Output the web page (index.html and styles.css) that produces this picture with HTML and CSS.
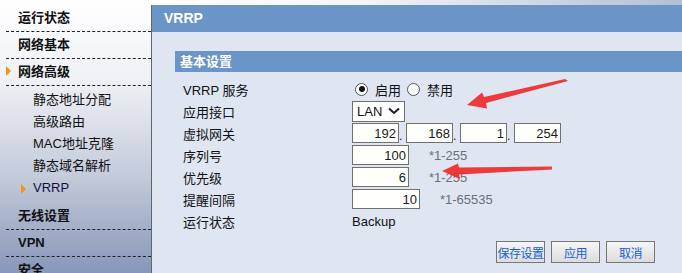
FILE: index.html
```html
<!DOCTYPE html>
<html lang="zh-CN">
<head>
  <meta charset="UTF-8">
  <title>VRRP</title>
  <link rel="stylesheet" href="styles.css">
</head>
<body>
  <div class="page">
    <!-- 左侧菜单 -->
    <div class="sidebar">
      <div class="menu-item">运行状态</div>
      <div class="menu-item">网络基本</div>
      <div class="menu-item open"><span class="tri"></span>网络高级</div>
      <div class="submenu">
        <div class="sub-item">静态地址分配</div>
        <div class="sub-item">高级路由</div>
        <div class="sub-item">MAC地址克隆</div>
        <div class="sub-item">静态域名解析</div>
        <div class="sub-item active"><span class="tri small"></span>VRRP</div>
      </div>
      <div class="menu-item">无线设置</div>
      <div class="menu-item">VPN</div>
      <div class="menu-item">安全</div>
    </div>

    <!-- 右侧内容 -->
    <div class="main">
      <div class="top-strip"></div>
      <div class="panel">
        <div class="panel-title">VRRP</div>
        <div class="content">
          <div class="section-title">基本设置</div>

          <div class="form-row">
            <label class="label">VRRP 服务</label>
            <div class="ctrl">
              <span class="radio checked"></span><span class="radio-text">启用</span>
              <span class="radio"></span><span class="radio-text">禁用</span>
            </div>
          </div>
          <div class="form-row">
            <label class="label">应用接口</label>
            <div class="ctrl">
              <div class="select">
                <span>LAN</span>
                <svg width="12" height="8" viewBox="0 0 12 8"><path d="M1 1.5 L6 6 L11 1.5" fill="none" stroke="#1a1a2a" stroke-width="2"/></svg>
              </div>
            </div>
          </div>
          <div class="form-row">
            <label class="label">虚拟网关</label>
            <div class="ctrl">
              <input class="box ip" type="text" value="192"><span class="dot">.</span>
              <input class="box ip" type="text" value="168"><span class="dot">.</span>
              <input class="box ip" type="text" value="1"><span class="dot">.</span>
              <input class="box ip" type="text" value="254">
            </div>
          </div>
          <div class="form-row">
            <label class="label">序列号</label>
            <div class="ctrl">
              <input class="box w57" type="text" value="100"><span class="hint">*1-255</span>
            </div>
          </div>
          <div class="form-row">
            <label class="label">优先级</label>
            <div class="ctrl">
              <input class="box w57" type="text" value="6"><span class="hint">*1-255</span>
            </div>
          </div>
          <div class="form-row">
            <label class="label">提醒间隔</label>
            <div class="ctrl">
              <input class="box w68" type="text" value="10"><span class="hint">*1-65535</span>
            </div>
          </div>
          <div class="form-row">
            <label class="label">运行状态</label>
            <div class="ctrl">Backup</div>
          </div>

          <div class="btn-row">
            <button class="btn">保存设置</button>
            <button class="btn">应用</button>
            <button class="btn">取消</button>
          </div>
        </div>
      </div>
    </div>

    <!-- 截图上的红色箭头标注 -->
    <svg class="marks" width="682" height="273" viewBox="0 0 682 273">
      <polygon points="467,105 482,92.5 484,97 565,79 568,81 486,103 487,108.5" fill="#ee2b2b" opacity="0.92"/>
      <polygon points="442,171 458,163.5 459,167.5 552,166.5 552,169.5 459,174.5 460,179" fill="#ee2b2b" opacity="0.92"/>
    </svg>
  </div>
</body>
</html>
```

FILE: styles.css
```css
* {
  box-sizing: border-box;
}

body {
  margin: 0;
  font-family: "Liberation Sans", "Noto Sans CJK SC", sans-serif;
  font-size: 13px;
  color: #111;
}

.page {
  position: relative;
  display: flex;
  width: 682px;
  height: 273px;
  overflow: hidden;
}

/* 左侧菜单 */
.sidebar {
  width: 151px;
  flex-shrink: 0;
  padding-top: 5px;
  background: linear-gradient(#ffffff, #eef0f4 30%, #c3cad9 65%, #8797b9);
}

.menu-item {
  position: relative;
  height: 27px;
  line-height: 26px;
  margin-left: 6px;
  padding-left: 12px;
  font-weight: bold;
  font-size: 13px;
  border-bottom: 1px dashed #222;
}

.submenu {
  padding: 3px 0 4px 0;
}

.sub-item {
  position: relative;
  height: 22px;
  line-height: 22px;
  padding-left: 33px;
  font-size: 13px;
}

.sub-item.active {
  color: #101040;
}

.tri {
  position: absolute;
  left: 0;
  top: 7px;
  width: 0;
  height: 0;
  border-top: 5px solid transparent;
  border-bottom: 5px solid transparent;
  border-left: 5px solid #f29418;
}

.tri.small {
  left: 21px;
  top: 7px;
}

/* 右侧内容 */
.main {
  flex: 1;
  display: flex;
  flex-direction: column;
}

.top-strip {
  height: 5px;
  background: linear-gradient(90deg, #ffffff, #f4f5f8 40%, #b3bfd3);
}

.panel {
  flex: 1;
  border-left: 1px solid #5f6670;
  background: #dfe6f2;
}

.panel-title {
  height: 27px;
  line-height: 26px;
  padding-left: 12px;
  background: #6a95c6;
  color: #fff;
  font-weight: bold;
  font-size: 14px;
}

.content {
  padding: 19px 0 0 23px;
}

.section-title {
  height: 21px;
  line-height: 21px;
  padding-left: 5px;
  background: #6a95c6;
  color: #fff;
  font-weight: bold;
  font-size: 13px;
  margin-bottom: 6px;
}

.form-row {
  display: flex;
  align-items: center;
  height: 22px;
}

.label {
  width: 177px;
  padding-left: 8px;
  flex-shrink: 0;
}

.ctrl {
  display: flex;
  align-items: center;
}

.radio {
  display: inline-block;
  width: 13px;
  height: 13px;
  margin-left: 3px;
  border: 1px solid #555;
  border-radius: 50%;
  background: #fff;
  position: relative;
}

.radio.checked::after {
  content: "";
  position: absolute;
  left: 2.5px;
  top: 2.5px;
  width: 6px;
  height: 6px;
  border-radius: 50%;
  background: #111;
}

.radio-text {
  margin-left: 7px;
  margin-right: 3px;
}

.select {
  display: flex;
  align-items: center;
  justify-content: space-between;
  width: 53px;
  height: 21px;
  padding: 0 4px 0 4px;
  border: 1px solid #6e6e6e;
  background: #fff;
  font-size: 13px;
}

.box {
  height: 20px;
  border: 1px solid #707070;
  background: #fffffc;
  font-family: "Liberation Sans", sans-serif;
  font-size: 13px;
  color: #1a1a1a;
  text-align: right;
  padding: 0 2px 0 0;
  margin: 0;
}

.ip {
  width: 47px;
}

.dot {
  width: 7px;
  align-self: flex-end;
  line-height: 14px;
  font-size: 12px;
}

.w57 {
  width: 57px;
}

.w68 {
  width: 68px;
}

.hint {
  margin-left: 20px;
  color: #6b6f78;
}

.btn-row {
  display: flex;
  justify-content: flex-end;
  gap: 6px;
  margin-top: 9px;
  margin-right: 27px;
}

.btn {
  width: 49px;
  height: 22px;
  padding: 0;
  border: 1px solid #777;
  background: linear-gradient(#f6f6f6, #dcdcdc);
  color: #1560d8;
  font-family: "Noto Sans CJK SC", sans-serif;
  font-size: 12px;
  white-space: nowrap;
  letter-spacing: -0.5px;
}

.marks {
  position: absolute;
  left: 0;
  top: 0;
  pointer-events: none;
}
```
